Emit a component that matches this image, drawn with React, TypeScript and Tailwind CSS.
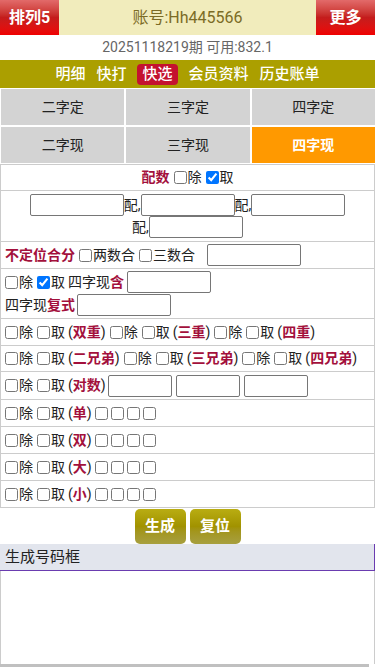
import { useState } from 'react'

const maroon = 'text-[#a3103c] font-bold'

function Cb({ checked = false, className = 'ml-[4px] mr-[1px]' }: { checked?: boolean; className?: string }) {
  const [on, setOn] = useState(checked)
  return (
    <input
      type="checkbox"
      checked={on}
      onChange={() => setOn(!on)}
      className={`w-[13px] h-[13px] shrink-0 ${className}`}
    />
  )
}

function Box({ w = 'w-[94px]' }: { w?: string }) {
  return <input type="text" className={`${w} h-[22px] border border-[#767676] rounded-[2px] bg-white shrink-0`} />
}

// 除 / 取 pair
function Pick() {
  return (
    <>
      <Cb />除<Cb />取
    </>
  )
}

function Tag({ t }: { t: string }) {
  return (
    <span className="ml-[3px]">
      (<span className={maroon}>{t}</span>)
    </span>
  )
}

function Row({ children, className = '' }: { children: React.ReactNode; className?: string }) {
  return <div className={`flex items-center border-t border-[#ccc] whitespace-nowrap ${className}`}>{children}</div>
}

export default function App() {
  const [tab, setTab] = useState(5)
  const tabs = ['二字定', '三字定', '四字定', '二字现', '三字现', '四字现']
  const nav = ['明细', '快打', '快选', '会员资料', '历史账单']

  return (
    <div className="w-[375px] bg-white text-[14px] text-[#222] font-['Roboto','Noto_Sans_CJK_SC',sans-serif]">
      {/* Header */}
      <div className="flex h-[35px]">
        <button className="w-[59px] text-white font-bold text-[16px] bg-gradient-to-b from-[#e26a6a] via-[#c41c1c] to-[#f00000]">
          排列5
        </button>
        <div className="flex-1 flex items-center justify-center bg-[#f1ecbc] text-[#7b6b25] text-[16px]">
          账号:Hh445566
        </div>
        <button className="w-[59px] text-white font-bold text-[16px] bg-gradient-to-b from-[#e26a6a] via-[#c41c1c] to-[#f00000]">
          更多
        </button>
      </div>

      <div className="h-[25px] flex items-center justify-center text-[#666]">20251118219期 可用:832.1</div>

      {/* Nav */}
      <div className="h-[28px] bg-[#ab9f00] flex items-center justify-center gap-[11px] text-white text-[15px] font-medium">
        {nav.map(n => (
          <span key={n} className={n === '快选' ? 'bg-[#c4122f] rounded-[4px] px-[5px] leading-[21px]' : ''}>
            {n}
          </span>
        ))}
      </div>

      {/* Tabs */}
      <div className="grid grid-cols-3 gap-[2px] pl-[1px] pt-[1px] pb-[1px]">
        {tabs.map((t, i) => (
          <button
            key={t}
            onClick={() => setTab(i)}
            className={`h-[36px] text-[14px] ${i === tab ? 'bg-[#ff9900] text-white font-bold' : 'bg-[#d3d3d3] text-[#222]'}`}
          >
            {t}
          </button>
        ))}
      </div>

      {/* Form table */}
      <div className="border-x border-b border-[#ccc]">
        <Row className="h-[26px] justify-center">
          <span className={maroon}>配数</span>
          <Cb />除<Cb checked />取
        </Row>
        <Row className="h-[51px] flex-col justify-center">
          <div className="flex items-center">
            <Box />配,<Box />配,<Box />
          </div>
          <div className="flex items-center">
            配,<Box />
          </div>
        </Row>
        <Row className="h-[27px] pl-[4px]">
          <span className={maroon}>不定位合分</span>
          <Cb />两数合<Cb />三数合
          <span className="w-[12px]" />
          <Box />
        </Row>
        <Row className="h-[50px] flex-col items-start justify-center gap-[1px]">
          <div className="flex items-center">
            <Cb />除<Cb checked />取<span className="ml-[3px]">四字现</span>
            <span className={maroon}>含</span>
            <span className="w-[3px]" />
            <Box w="w-[84px]" />
          </div>
          <div className="flex items-center pl-[4px]">
            四字现<span className={maroon}>复式</span>
            <span className="w-[2px]" />
            <Box />
          </div>
        </Row>
        <Row className="h-[27px]">
          <Pick /><Tag t="双重" />
          <Pick /><Tag t="三重" />
          <Pick /><Tag t="四重" />
        </Row>
        <Row className="h-[26px]">
          <Pick /><Tag t="二兄弟" />
          <Pick /><Tag t="三兄弟" />
          <Pick /><Tag t="四兄弟" />
        </Row>
        <Row className="h-[28px]">
          <Pick /><Tag t="对数" />
          <div className="flex gap-[4px] ml-[2px]">
            <Box w="w-[64px]" />
            <Box w="w-[64px]" />
            <Box w="w-[64px]" />
          </div>
        </Row>
        {['单', '双', '大', '小'].map(k => (
          <Row key={k} className="h-[27px]">
            <Pick /><Tag t={k} />
            <Cb className="ml-[3px]" /><Cb className="ml-[3px]" /><Cb className="ml-[3px]" /><Cb className="ml-[3px]" />
          </Row>
        ))}
      </div>

      {/* Actions */}
      <div className="flex justify-center gap-[4px] pt-px">
        {['生成', '复位'].map(b => (
          <button
            key={b}
            className="w-[51px] h-[35px] rounded-[5px] text-white font-bold text-[15px] bg-gradient-to-b from-[#b9ad12] via-[#a19200] to-[#a79f3e]"
          >
            {b}
          </button>
        ))}
      </div>

      {/* Output */}
      <div className="h-[27px] bg-[#e2e5ed] border-b border-r border-[#6a3cb0] flex items-center pl-[5px] text-[15px] text-[#222]">
        生成号码框
      </div>
      <div className="h-[93px] border-x border-[#ccc]" />
      <div className="h-[4px] w-[369px] bg-[#c0c0c0]" />
    </div>
  )
}
